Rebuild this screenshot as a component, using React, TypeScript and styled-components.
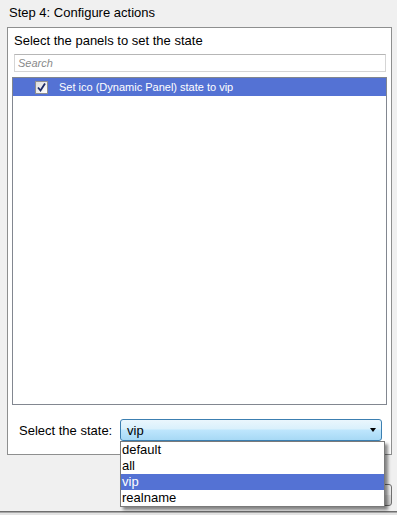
import styled, { createGlobalStyle } from "styled-components"

const GlobalStyle = createGlobalStyle`
    html, body {
        margin: 0;
        padding: 0;
        background: #f0f0f0;
        font-family: "Liberation Sans", Arial, sans-serif;
        color: #000;
    }
`

const states = ["default", "all", "vip", "realname"]

const Page = styled.div`
    position: relative;
    width: 397px;
    height: 515px;
    overflow: hidden;
    padding: 5px 6px 0 7px;
    box-sizing: border-box;
    display: flex;
    flex-direction: column;
`

const StepTitle = styled.div`
    font-size: 13px;
    line-height: 16px;
    padding-left: 2px;
`

const Group = styled.div`
    margin-top: 6px;
    width: 385px;
    height: 428px;
    box-sizing: border-box;
    background: #fff;
    border: 1px solid #8e8f8f;
    padding: 5px 4px 0 4px;
    display: flex;
    flex-direction: column;
`

const Heading = styled.div`
    font-size: 13px;
    line-height: 16px;
    padding-left: 2px;
`

const SearchInput = styled.input`
    margin: 5px 1px 0 2px;
    height: 18px;
    box-sizing: border-box;
    border: 1px solid #d5d5d5;
    border-top-color: #b6b6b6;
    font-family: "Liberation Sans", Arial, sans-serif;
    font-size: 11px;
    padding: 0 3px;
    outline: none;
    &::placeholder {
        color: #8a8a8a;
        font-style: italic;
    }
`

const ListBox = styled.div`
    margin-top: 5px;
    height: 328px;
    box-sizing: border-box;
    border: 1px solid #828790;
    background: #fff;
`

const ListRow = styled.div<{ $selected?: boolean }>`
    height: 18px;
    display: flex;
    align-items: center;
    background: ${p => (p.$selected ? "#5472d4" : "transparent")};
    color: ${p => (p.$selected ? "#fff" : "#000")};
    font-size: 11px;
    padding-left: 22px;
`

const CheckBox = styled.span`
    width: 13px;
    height: 13px;
    box-sizing: border-box;
    border: 1px solid #8f8f8f;
    background: linear-gradient(135deg, #dcdcdc, #ffffff);
    display: flex;
    align-items: center;
    justify-content: center;
    margin-right: 11px;
`

const StateRow = styled.div`
    margin-top: 14px;
    display: flex;
    align-items: center;
    padding-left: 7px;
`

const StateLabel = styled.span`
    font-size: 13px;
    width: 101px;
`

const ComboWrap = styled.div`
    position: relative;
`

const Combo = styled.div`
    width: 262px;
    height: 22px;
    box-sizing: border-box;
    border: 1px solid #3c7fb1;
    border-radius: 3px;
    background: linear-gradient(#eaf6fd 0%, #d9f0fc 45%, #bee6fd 50%, #a7d9f5 100%);
    display: flex;
    align-items: center;
    justify-content: space-between;
    padding: 0 5px 0 6px;
    font-size: 13px;
`

const Arrow = styled.span`
    width: 0;
    height: 0;
    border-left: 3.5px solid transparent;
    border-right: 3.5px solid transparent;
    border-top: 4px solid #000;
`

const DropList = styled.div`
    position: absolute;
    top: 22px;
    left: 0;
    width: 265px;
    box-sizing: border-box;
    border: 1px solid #7a7a7a;
    background: #fff;
    box-shadow: 3px 3px 3px rgba(0, 0, 0, 0.45);
    z-index: 5;
`

const DropItem = styled.div<{ $active?: boolean }>`
    height: 16px;
    line-height: 16px;
    font-size: 13px;
    padding-left: 1px;
    background: ${p => (p.$active ? "#5472d4" : "#fff")};
    color: ${p => (p.$active ? "#fff" : "#000")};
`

const Footer = styled.div`
    margin-top: 29px;
    width: 385px;
    display: flex;
    justify-content: flex-end;
`

const Button = styled.button`
    width: 75px;
    height: 22px;
    border: 1px solid #707070;
    border-radius: 3px;
    background: linear-gradient(#f2f2f2, #ebebeb 50%, #dddddd 50%, #cfcfcf);
    font-family: "Liberation Sans", Arial, sans-serif;
    font-size: 12px;
`

const BottomEdge = styled.div`
    position: absolute;
    left: 0;
    right: 0;
    top: 511px;
    height: 4px;
    border-top: 1px solid #6f6f6f;
    background: #e3e3e3;
    box-shadow: inset 0 1px 0 #a8a8a8;
`

export default function App() {
    return (
        <>
            <GlobalStyle />
            <Page>
                <StepTitle>Step 4: Configure actions</StepTitle>
                <Group>
                    <Heading>Select the panels to set the state</Heading>
                    <SearchInput placeholder="Search" />
                    <ListBox>
                        <ListRow $selected>
                            <CheckBox>
                                <svg width="9" height="9" viewBox="0 0 9 9">
                                    <path d="M1 4.5 L3.5 7.5 L8 0.5" fill="none" stroke="#1c2a66" strokeWidth="1.8" />
                                </svg>
                            </CheckBox>
                            Set ico (Dynamic Panel) state to vip
                        </ListRow>
                    </ListBox>
                    <StateRow>
                        <StateLabel>Select the state:</StateLabel>
                        <ComboWrap>
                            <Combo>
                                <span>vip</span>
                                <Arrow />
                            </Combo>
                            <DropList>
                                {states.map(s => (
                                    <DropItem key={s} $active={s === "vip"}>{s}</DropItem>
                                ))}
                            </DropList>
                        </ComboWrap>
                    </StateRow>
                </Group>
                <Footer>
                    <Button>OK</Button>
                </Footer>
                <BottomEdge />
            </Page>
        </>
    )
}
